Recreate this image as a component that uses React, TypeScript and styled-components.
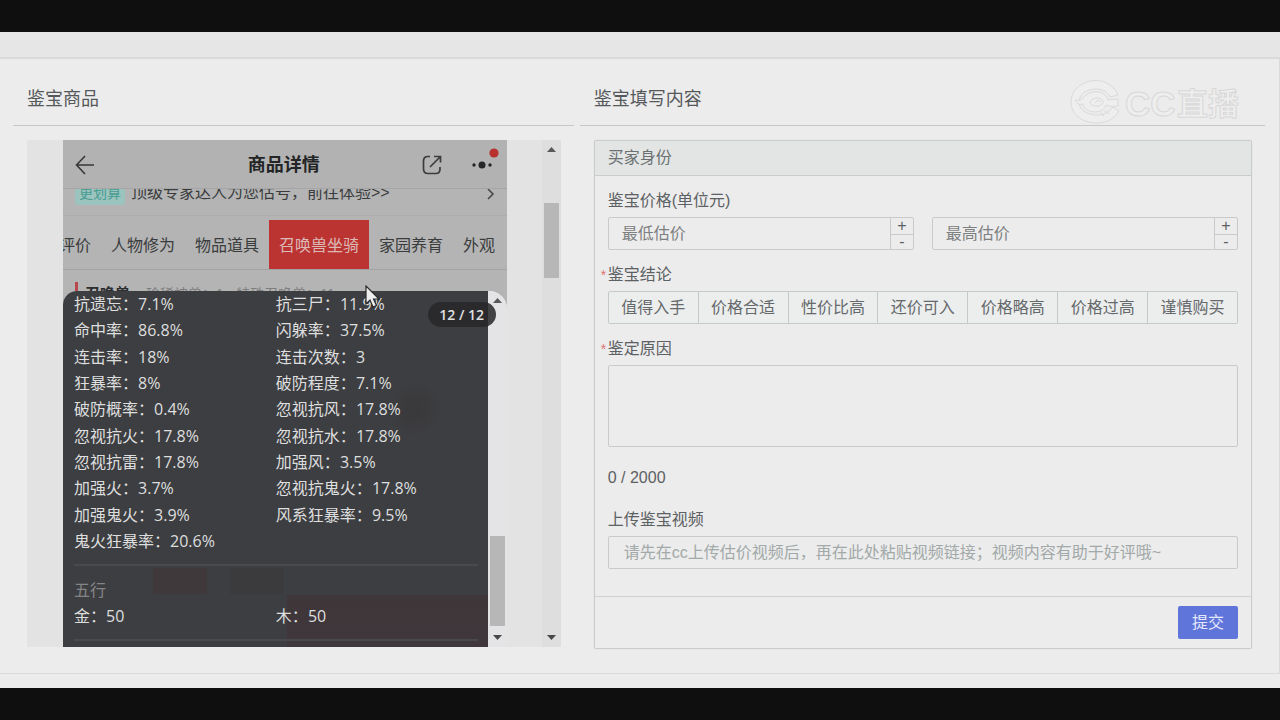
import React, { useState } from "react";
import styled, { createGlobalStyle } from "styled-components";

const GlobalStyle = createGlobalStyle`
  * { box-sizing: border-box; }
  body {
    margin: 0;
    background: #0f0f0f;
    color: #5c6163;
    font: 16px/24px "Liberation Sans", "Noto Sans CJK SC", sans-serif;
  }
  button, input, textarea { font: inherit; color: inherit; }
`;

const Page = styled.div`
  min-height: 100vh;
  display: flex;
  flex-direction: column;
  padding: 32px 0;
`;

const Surface = styled.main`
  flex: 1;
  padding-bottom: 13px;
  background: #ececec;
`;

const TopBand = styled.div`
  height: 25px;
  background: #e6e6e6;
`;

const Board = styled.div`
  position: relative;
  display: grid;
  grid-template-columns: 9fr 11fr;
  gap: 6px;
  padding: 0 14px 24px 13px;
  border: solid #dadada;
  border-width: 2px 1px 1px 0;
`;

const Column = styled.section`
  min-width: 0;
`;

const ColumnTitle = styled.h2`
  margin: 0 0 14px;
  padding: 28px 14px 14px;
  border-bottom: 1px solid #c6c8c8;
  color: #55595b;
  font-size: 18px;
  font-weight: 400;
  line-height: 24px;
`;

const ProductView = styled.div`
  display: flex;
  height: 507px;
  margin: 0 13px 0 14px;
  background: #e3e3e3;
`;

const Phone = styled.div`
  position: relative;
  flex: 1;
  min-width: 0;
  margin: 0 35px 0 36px;
  overflow: hidden;
  background: #b4b4b4;
  color: #3a3c3d;
`;

const PhoneHeader = styled.header`
  display: grid;
  grid-template-columns: 1fr auto 1fr;
  align-items: center;
  height: 49px;
  padding: 2px 14px 0 12px;
  border-bottom: 1px solid #a5a5a5;
  background: #b2b2b2;
`;

const PhoneTitle = styled.h3`
  margin: 0;
  color: #222425;
  font-size: 18px;
  font-weight: 700;
`;

const HeaderActions = styled.div`
  display: flex;
  justify-content: flex-end;
  gap: 30px;
`;

const IconButton = styled.button`
  display: flex;
  padding: 0;
  border: 0;
  background: none;
  justify-self: start;
`;

const AdviceRow = styled.div`
  display: flex;
  align-items: flex-end;
  gap: 6px;
  height: 27px;
  padding: 0 12px 10px;
  overflow: hidden;
  border-bottom: 1px solid #adadad;
  white-space: nowrap;
`;

const AdviceTag = styled.span`
  width: 50px;
  border-radius: 3px;
  background: #9cc4be;
  color: #479c92;
  font-size: 14px;
  text-align: center;
`;

const AdviceArrow = styled.svg`
  margin: 0 0 4px auto;
`;

const TabStrip = styled.nav`
  display: flex;
  margin: 4px 0 0 -14px;
  border-bottom: 1px solid #a3a3a3;
`;

const Tab = styled.button<{ $active?: boolean }>`
  flex: none;
  height: 49px;
  padding: 3px 10px 0;
  border: 0;
  background: ${(p) => (p.$active ? "#bb3431" : "transparent")};
  color: ${(p) => (p.$active ? "#dcbab7" : "#3a3c3d")};
`;

const SectionHead = styled.div`
  display: flex;
  align-items: center;
  gap: 16px;
  padding: 12px;
  color: #7e7e7e;
  font-size: 14px;
  white-space: nowrap;

  strong {
    padding-left: 7px;
    border-left: 3px solid #b9474c;
    color: #2c2d2e;
    font-size: 15px;
  }
`;

const Sheet = styled.div`
  position: absolute;
  inset: 151px 0 0;
  display: flex;
  overflow: hidden;
  border-radius: 14px 18px 0 0;
  background: #e4e4e6;
`;

const SheetBody = styled.div`
  flex: 1;
  padding: 0 10px 0 11px;
  background:
    linear-gradient(#3f363a, #3f373b) 224px 304px / 201px 60px no-repeat,
    linear-gradient(#3f393c, #3f393c) 90px 277px / 54px 26px no-repeat,
    linear-gradient(#3b3b3e, #3b3b3e) 167px 277px / 54px 26px no-repeat,
    radial-gradient(closest-side, #39383b, #3d3e41) 324px 90px / 56px 56px no-repeat,
    #3d3e41;
  color: #dededf;
  font-family: "Open Sans", "Noto Sans CJK SC", sans-serif;
`;

const StatGrid = styled.dl<{ $height: number }>`
  display: grid;
  grid-template-columns: 1fr 1fr;
  grid-auto-rows: 1fr;
  align-items: center;
  height: ${(p) => p.$height}px;
  margin: 0;
`;

const Stat = styled.div`
  display: flex;
  dt, dd { margin: 0; }
`;

const Divider = styled.hr`
  margin: 10px 0;
  border: 0;
  border-top: 2px solid #4a4a4d;
`;

const SheetLabel = styled.div`
  height: 27px;
  line-height: 28px;
  color: #858588;
`;

const Counter = styled.div`
  position: absolute;
  top: 11px;
  right: 11px;
  width: 68px;
  border-radius: 13px;
  background: rgba(40, 40, 42, 0.86);
  color: #e0e0e0;
  font: 600 14px/25px "Open Sans", sans-serif;
  text-align: center;
`;

const Pointer = styled.svg`
  position: absolute;
  top: 145px;
  left: 302px;
`;

const Track = styled.div<{ $bg: string }>`
  display: flex;
  flex-direction: column;
  align-items: center;
  flex: none;
  width: 19px;
  padding: 6px 0;
  background: ${(p) => p.$bg};
`;

const Thumb = styled.div<{ $before: number; $height: number }>`
  width: 15px;
  height: ${(p) => p.$height}px;
  margin: ${(p) => p.$before}px 0 auto;
  background: #b7b7b8;
`;

const Card = styled.form`
  margin: 0 13px 0 14px;
  border: 1px solid #cacccc;
  border-radius: 2px;
  box-shadow: 0 0 1px #c8c8c8;
`;

const CardHead = styled.div`
  height: 35px;
  padding: 0 13px;
  border-bottom: 1px solid #c9cccc;
  background: #e2e5e4;
  color: #6b7072;
  line-height: 34px;
`;

const CardBody = styled.div`
  padding: 13px 13px 27px;
`;

const Field = styled.div<{ $after: number }>`
  margin-bottom: ${(p) => p.$after}px;
`;

const Label = styled.label`
  display: flex;
  margin-bottom: 4px;
  line-height: 24px;
`;

const Star = styled.span`
  width: 7px;
  margin-left: -7px;
  color: #dd7577;
  font-size: 14px;
`;

const PriceRow = styled.div`
  display: flex;
  gap: 18px;
`;

const NumberBox = styled.div`
  display: flex;
  flex: 1;
  min-width: 0;
  height: 33px;
  border: 1px solid #c9cbcb;
  border-radius: 2px;
`;

const NumberInput = styled.input`
  flex: 1;
  min-width: 0;
  padding: 0 13px;
  border: 0;
  background: transparent;
  outline: none;
  &::placeholder { color: #7d8080; opacity: 1; }
`;

const Stepper = styled.div`
  display: grid;
  grid-template-rows: 1fr 1fr;
  width: 23px;
  border-left: 1px solid #c9cbcb;
`;

const StepButton = styled.button`
  display: flex;
  align-items: center;
  justify-content: center;
  min-height: 0;
  padding: 0;
  border: 0;
  background: none;
  line-height: 14px;
  & + & { border-top: 1px solid #c9cbcb; }
`;

const Choices = styled.div`
  display: flex;
  height: 33px;
  border: 1px solid #c6c9c9;
  border-radius: 2px;
`;

const Choice = styled.label<{ $on: boolean }>`
  position: relative;
  flex: 1;
  background: ${(p) => (p.$on ? "#dfe3ee" : "#eceeee")};
  color: #65696b;
  line-height: 32px;
  text-align: center;
  white-space: nowrap;
  & + & { border-left: 1px solid #c6c9c9; }

  input {
    position: absolute;
    inset: 0;
    margin: 0;
    opacity: 0;
  }
`;

const Reason = styled.textarea`
  display: block;
  width: 100%;
  height: 82px;
  padding: 6px 13px;
  border: 1px solid #c9cbcb;
  border-radius: 2px;
  background: transparent;
  resize: none;
`;

const Count = styled.div`
  margin-top: 19px;
`;

const LinkInput = styled.input`
  display: block;
  width: 100%;
  height: 33px;
  padding: 0 15px;
  border: 1px solid #c9cbcb;
  border-radius: 2px;
  background: transparent;
  &::placeholder { color: #a2a9a9; opacity: 1; }
`;

const CardFoot = styled.div`
  display: flex;
  justify-content: flex-end;
  padding: 9px 13px;
  border-top: 1px solid #d0d2d2;
`;

const Submit = styled.button`
  width: 60px;
  height: 33px;
  padding: 0;
  border: 0;
  border-radius: 2px;
  background: #6075da;
  color: #e4e8fa;
`;

const Watermark = styled.svg`
  position: absolute;
  top: 19px;
  right: 38px;
`;

const stats: [string, string][] = [
  ["抗遗忘", "7.1%"], ["抗三尸", "11.9%"],
  ["命中率", "86.8%"], ["闪躲率", "37.5%"],
  ["连击率", "18%"], ["连击次数", "3"],
  ["狂暴率", "8%"], ["破防程度", "7.1%"],
  ["破防概率", "0.4%"], ["忽视抗风", "17.8%"],
  ["忽视抗火", "17.8%"], ["忽视抗水", "17.8%"],
  ["忽视抗雷", "17.8%"], ["加强风", "3.5%"],
  ["加强火", "3.7%"], ["忽视抗鬼火", "17.8%"],
  ["加强鬼火", "3.9%"], ["风系狂暴率", "9.5%"],
  ["鬼火狂暴率", "20.6%"],
];

const elements: [string, string][] = [["金", "50"], ["木", "50"]];

const tabs = ["评价", "人物修为", "物品道具", "召唤兽坐骑", "家园养育", "外观"];

const verdicts = ["值得入手", "价格合适", "性价比高", "还价可入", "价格略高", "价格过高", "谨慎购买"];

function Stats({ items, height }: { items: [string, string][]; height: number }) {
  return (
    <StatGrid $height={height}>
      {items.map(([name, value]) => (
        <Stat key={name}>
          <dt>{name}：</dt>
          <dd>{value}</dd>
        </Stat>
      ))}
    </StatGrid>
  );
}

function Scrollbar({ bg, before, height }: { bg: string; before: number; height: number }) {
  return (
    <Track $bg={bg}>
      <svg width="9" height="6" viewBox="0 0 9 6"><path d="M0 6 4.5 1 9 6z" fill="#56585a" /></svg>
      <Thumb $before={before} $height={height} />
      <svg width="9" height="6" viewBox="0 0 9 6"><path d="M0 0 4.5 5 9 0z" fill="#46484a" /></svg>
    </Track>
  );
}

function PriceInput({ name }: { name: string }) {
  const [value, setValue] = useState("");
  const step = (by: number) => setValue(String(Math.max(0, Number(value) + by)));
  return (
    <NumberBox>
      <NumberInput
        aria-label={name}
        placeholder={name}
        inputMode="numeric"
        value={value}
        onChange={(e) => setValue(e.target.value.replace(/\D/g, ""))}
      />
      <Stepper>
        <StepButton type="button" onClick={() => step(1)}>+</StepButton>
        <StepButton type="button" onClick={() => step(-1)}>-</StepButton>
      </Stepper>
    </NumberBox>
  );
}

function Logo() {
  return (
    <Watermark width="172" height="48" viewBox="0 0 172 48" fill="none" role="img" aria-label="CC直播">
      <g stroke="#dadada" strokeWidth="1">
        <path d="M49 17C44 5 32 1 21 3 9 6 2 14 2 24c0 13 12 21 26 21 10 0 18-5 22-12l-6-4c-4 5-9 8-16 8-11 0-18-6-18-13S17 11 27 11c7 0 12 3 14 8z" fill="#eeeeee" />
        <path d="M6 22c4 1 6 0 8-2 4-5 10-7 16-6 5 1 8 4 9 8l10-1v7c-4 1-8 1-12-1-2 5-6 7-11 7-7 0-11-4-12-8-3 1-6 0-8-4z" fill="#eeeeee" />
        <path d="M21 25c0-5 10-7 13-2 1 5-9 8-13 2zm5 0 3-3 3 2" />
        <path d="m31 35 4 3m1-5 4 3" />
      </g>
      <g fill="#eeeeee" stroke="#d8d8d8" strokeWidth="1" fontWeight="700">
        <text x="56" y="38" fontSize="35" fontFamily="Liberation Sans, sans-serif">CC</text>
        <text x="108" y="37" fontSize="31" fontFamily="Noto Sans CJK SC, sans-serif">直播</text>
      </g>
    </Watermark>
  );
}

export default function App() {
  const [verdict, setVerdict] = useState("");
  const [reason, setReason] = useState("");

  return (
    <Page>
      <GlobalStyle />
      <Surface>
        <TopBand />
        <Board>
          <Column>
            <ColumnTitle>鉴宝商品</ColumnTitle>
            <ProductView>
              <Phone>
                <PhoneHeader>
                  <IconButton aria-label="返回">
                    <svg width="20" height="20" viewBox="0 0 20 20" fill="none" stroke="#363839" strokeWidth="1.6">
                      <path d="M19 10H2M10 1 1.500 10 10 19" />
                    </svg>
                  </IconButton>
                  <PhoneTitle>商品详情</PhoneTitle>
                  <HeaderActions>
                    <IconButton aria-label="分享">
                      <svg width="20" height="20" viewBox="0 0 20 20" fill="none" stroke="#3b3d3e" strokeWidth="1.7">
                        <path d="M8 1.500H6Q1.500 1.500 1.500 6v8q0 4.500 4.500 4.500h8q4 0 4-4.500v-2M12 1.500H18.500v6M18.500 1.500 8 12" />
                      </svg>
                    </IconButton>
                    <IconButton aria-label="更多">
                      <svg width="21" height="20" viewBox="0 0 21 20" overflow="visible" fill="#242627">
                        <circle cx="2" cy="10" r="1.700" />
                        <circle cx="10" cy="10" r="3.500" />
                        <circle cx="18" cy="10" r="1.700" />
                        <circle cx="22" cy="-2" r="4.600" fill="#b8322f" />
                      </svg>
                    </IconButton>
                  </HeaderActions>
                </PhoneHeader>
                <AdviceRow>
                  <AdviceTag>更划算</AdviceTag>
                  <span>顶级专家达人为您估号，前往体验&gt;&gt;</span>
                  <AdviceArrow width="8" height="14" viewBox="0 0 8 14" fill="none" stroke="#444" strokeWidth="1.5">
                    <path d="m1 2 5 5-5 5" />
                  </AdviceArrow>
                </AdviceRow>
                <TabStrip>
                  {tabs.map((t) => (
                    <Tab key={t} $active={t === "召唤兽坐骑"}>{t}</Tab>
                  ))}
                </TabStrip>
                <SectionHead>
                  <strong>召唤兽</strong>
                  <span>珍稀神兽：1 · 特殊召唤兽：11</span>
                </SectionHead>
                <Sheet>
                  <SheetBody>
                    <Stats items={stats} height={263} />
                    <Divider />
                    <SheetLabel>五行</SheetLabel>
                    <Stats items={elements} height={26} />
                    <Divider />
                  </SheetBody>
                  <Scrollbar bg="#e4e4e6" before={233} height={90} />
                  <Counter>12 / 12</Counter>
                </Sheet>
                <Pointer width="16" height="24" viewBox="0 0 16 24">
                  <path d="M1 1v18l4-4 3 7 3.500-1.500-3-6.500H14z" fill="#eeeeee" stroke="#2b2b2b" strokeWidth="1.200" />
                </Pointer>
              </Phone>
              <Scrollbar bg="#dedede" before={51} height={75} />
            </ProductView>
          </Column>

          <Column>
            <ColumnTitle>鉴宝填写内容</ColumnTitle>
            <Card onSubmit={(e) => e.preventDefault()}>
              <CardHead>买家身份</CardHead>
              <CardBody>
                <Field $after={13}>
                  <Label as="div">鉴宝价格(单位元)</Label>
                  <PriceRow>
                    <PriceInput name="最低估价" />
                    <PriceInput name="最高估价" />
                  </PriceRow>
                </Field>
                <Field $after={13} role="radiogroup" aria-labelledby="verdict">
                  <Label as="div" id="verdict"><Star>*</Star>鉴宝结论</Label>
                  <Choices>
                    {verdicts.map((v) => (
                      <Choice key={v} $on={v === verdict}>
                        <input type="radio" name="verdict" checked={v === verdict} onChange={() => setVerdict(v)} />
                        {v}
                      </Choice>
                    ))}
                  </Choices>
                </Field>
                <Field $after={18}>
                  <Label htmlFor="reason"><Star>*</Star>鉴定原因</Label>
                  <Reason id="reason" maxLength={2000} value={reason} onChange={(e) => setReason(e.target.value)} />
                  <Count>{reason.length} / 2000</Count>
                </Field>
                <Field $after={0}>
                  <Label htmlFor="video">上传鉴宝视频</Label>
                  <LinkInput id="video" placeholder="请先在cc上传估价视频后，再在此处粘贴视频链接；视频内容有助于好评哦~" />
                </Field>
              </CardBody>
              <CardFoot>
                <Submit type="submit">提交</Submit>
              </CardFoot>
            </Card>
          </Column>
          <Logo />
        </Board>
      </Surface>
    </Page>
  );
}
